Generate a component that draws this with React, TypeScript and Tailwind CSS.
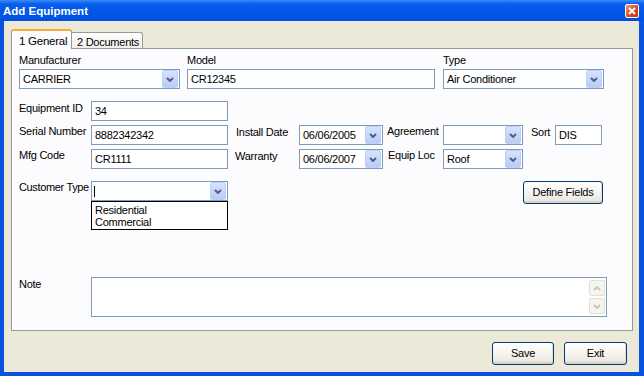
import React from 'react'

function Chevron({ up = false, color = '#4d6185' }: { up?: boolean; color?: string }) {
  return (
    <svg width="8" height="5" viewBox="0 0 8 5">
      <path
        d={up ? 'M1 4 L4 1 L7 4' : 'M1 1 L4 4 L7 1'}
        fill="none"
        stroke={color}
        strokeWidth="2"
      />
    </svg>
  )
}

function DropButton() {
  return (
    <div className="my-[1px] mr-[1px] flex h-[18px] w-[16px] shrink-0 items-center justify-center rounded-[2px] border border-[#bcd0fa] bg-[linear-gradient(to_bottom,#d6e2fd,#b9cbf7)]">
      <Chevron />
    </div>
  )
}

function Combo({ value, className }: { value?: string; className: string }) {
  return (
    <div className={`flex h-[20px] shrink-0 items-center border border-[#7f9db9] bg-white ${className}`}>
      <span className="flex-1 truncate pl-[3px]">{value}</span>
      <DropButton />
    </div>
  )
}

function TextBox({ value, className }: { value?: string; className: string }) {
  return (
    <div className={`flex h-[20px] shrink-0 items-center border border-[#7f9db9] bg-white pl-[3px] ${className}`}>
      {value}
    </div>
  )
}

function XpButton({ label, className }: { label: string; className: string }) {
  return (
    <button className={`h-[23px] shrink-0 rounded-[3px] border border-[#003c74] bg-[linear-gradient(to_bottom,#ffffff,#f3f2ec_60%,#e6e3d8)] text-[11px] shadow-[inset_0_-2px_0_#d8d2c6,inset_-1px_0_0_#e2dfd4] ${className}`}>
      {label}
    </button>
  )
}

function ScrollBtn({ up }: { up?: boolean }) {
  return (
    <div className="flex h-[16px] w-[16px] items-center justify-center rounded-[2px] border border-[#e0dfd8] bg-[#f5f4ef]">
      <Chevron up={up} color="#c9c7ba" />
    </div>
  )
}

export default function App() {
  return (
    <div className="flex h-[376px] w-[644px] flex-col overflow-hidden bg-[#0853df] font-['Liberation_Sans',Arial,sans-serif] text-[11px] tracking-[-0.25px] text-black">
      {/* title bar */}
      <div className="flex h-[21px] shrink-0 items-center bg-[linear-gradient(to_bottom,#3a8cf6_0%,#0a5ff0_18%,#0057e9_55%,#0050e0_100%)] pt-[3px]">
        <span className="pl-[3px] text-[11.5px] font-bold tracking-normal text-white">Add Equipment</span>
        <div className="ml-auto mr-[5px] -mt-[3px] flex h-[14px] w-[14px] items-center justify-center rounded-[2px] border border-white bg-[linear-gradient(135deg,#f39a7a,#dc4a22_55%,#c2380f)]">
          <svg width="8" height="8" viewBox="0 0 8 8">
            <path d="M1 1 L7 7 M7 1 L1 7" stroke="white" strokeWidth="1.8" />
          </svg>
        </div>
      </div>

      {/* body */}
      <div className="mb-[4px] ml-[4px] mr-[5px] flex flex-1 flex-col bg-[#ece9d8] pl-[7px] pt-[8px]">
        {/* tabs */}
        <div className="relative z-10 flex h-[20px] items-end">
          <div className="h-[20px] w-[61px] rounded-t-[3px] border-x border-t-2 border-x-[#919b9c] border-t-[#f4ad32] bg-[#fcfcfe] pl-[7px] pt-[2px] text-[11.5px]">
            1 General
          </div>
          <div className="mb-[1px] h-[16px] w-[71px] rounded-tr-[3px] border-r border-t border-[#919b9c] bg-[linear-gradient(to_bottom,#ffffff,#f0efe9)] pl-[5px] pt-[1px]">
            2 Documents
          </div>
        </div>

        {/* tab page */}
        <div className="-mt-[1px] flex h-[283px] w-[622px] flex-col border border-[#919b9c] bg-[#fcfcfe] pl-[7px] pt-[5px]">
          {/* row 1 */}
          <div className="flex">
            <div className="w-[161px]">
              <div className="h-[13px] leading-[13px]">Manufacturer</div>
              <Combo value="CARRIER" className="mt-[2px] w-[161px]" />
            </div>
            <div className="ml-[7px] w-[248px]">
              <div className="h-[13px] leading-[13px]">Model</div>
              <TextBox value="CR12345" className="mt-[2px] w-[248px]" />
            </div>
            <div className="ml-[8px] w-[161px]">
              <div className="h-[13px] leading-[13px]">Type</div>
              <Combo value="Air Conditioner" className="mt-[2px] w-[161px]" />
            </div>
          </div>

          {/* equipment id */}
          <div className="mt-[12px] flex items-start">
            <div className="w-[72px] leading-[13px] pt-[1px]">Equipment ID</div>
            <TextBox value="34" className="w-[137px]" />
          </div>

          {/* serial */}
          <div className="mt-[4px] flex items-start">
            <div className="w-[72px] leading-[13px]">Serial Number</div>
            <TextBox value="8882342342" className="w-[137px]" />
            <div className="w-[71px] pl-[8px] pt-[1px] leading-[13px]">Install Date</div>
            <Combo value="06/06/2005" className="w-[84px]" />
            <div className="w-[60px] pl-[4px] leading-[13px]">Agreement</div>
            <Combo className="w-[80px]" />
            <div className="w-[32px] pl-[8px] pt-[1px] leading-[13px]">Sort</div>
            <TextBox value="DIS" className="w-[47px]" />
          </div>

          {/* mfg code */}
          <div className="mt-[4px] flex items-start">
            <div className="w-[72px] leading-[13px]">Mfg Code</div>
            <TextBox value="CR1111" className="w-[137px]" />
            <div className="w-[71px] pl-[7px] pt-[1px] leading-[13px]">Warranty</div>
            <Combo value="06/06/2007" className="w-[84px]" />
            <div className="w-[60px] pl-[5px] leading-[13px]">Equip Loc</div>
            <Combo value="Roof" className="w-[80px]" />
          </div>

          {/* customer type */}
          <div className="mt-[12px] flex items-start">
            <div className="w-[72px] whitespace-nowrap leading-[13px] tracking-[-0.35px]">Customer Type</div>
            <div className="relative w-[137px]">
              <div className="flex h-[20px] items-center border border-[#7f9db9] bg-white">
                <span className="ml-[2px] h-[11px] w-px bg-black" />
                <span className="flex-1" />
                <DropButton />
              </div>
              <div className="absolute left-0 top-[20px] h-[29px] w-[137px] border border-black bg-white pl-[3px] pt-[2px] leading-[12px]">
                <div>Residential</div>
                <div>Commercial</div>
              </div>
            </div>
            <XpButton label="Define Fields" className="ml-[295px] w-[80px]" />
          </div>

          {/* note */}
          <div className="mt-[73px] flex items-start">
            <div className="w-[72px] pt-[1px] leading-[13px]">Note</div>
            <div className="flex h-[40px] w-[516px] justify-end border border-[#7f9db9] bg-white py-[2px] pr-[1px]">
              <div className="flex flex-col justify-between">
                <ScrollBtn up />
                <ScrollBtn />
              </div>
            </div>
          </div>
        </div>

        {/* bottom buttons */}
        <div className="mt-[11px] flex justify-end gap-[10px] pr-[12px]">
          <XpButton label="Save" className="w-[62px]" />
          <XpButton label="Exit" className="w-[63px]" />
        </div>
      </div>
    </div>
  )
}
